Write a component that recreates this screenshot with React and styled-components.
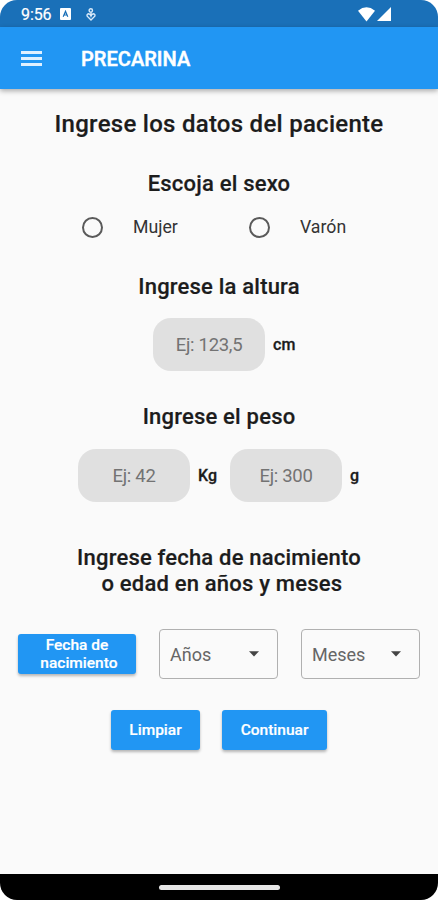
import React from 'react';
import styled, { createGlobalStyle } from 'styled-components';

const GlobalStyle = createGlobalStyle`
  * { box-sizing: border-box; }
  body { margin: 0; background: #fff; font-family: Roboto, sans-serif; }
  button, input { font-family: inherit; }
`;

const Screen = styled.div`
  width: 438px;
  height: 900px;
  display: flex;
  flex-direction: column;
  overflow: hidden;
  border-radius: 17px;
  background: #fafafa;
`;

const StatusBar = styled.div`
  height: 27px;
  flex: none;
  display: flex;
  align-items: center;
  padding: 1px 47px 0 21px;
  background: #1a70b8;
  color: #fff;
  svg { display: block; }
`;

const Clock = styled.span`
  width: 39px;
  padding-top: 1px;
  font-size: 16px;
  letter-spacing: -0.1px;
  line-height: 26px;
  -webkit-text-stroke: 0.2px;
`;

const StatusIcons = styled.div`
  flex: 1;
  display: flex;
  align-items: center;
  gap: ${(p) => p.$gap}px;
  justify-content: ${(p) => (p.$end ? 'flex-end' : 'flex-start')};
`;

const AppBar = styled.header`
  height: 62px;
  flex: none;
  display: flex;
  align-items: center;
  gap: 39px;
  padding: 1px 21px 0;
  background: #2196f3;
  box-shadow: 0 2px 5px rgba(0, 0, 0, 0.32);
`;

const MenuButton = styled.button`
  width: 21px;
  height: 15px;
  display: flex;
  flex-direction: column;
  justify-content: space-between;
  padding: 0;
  border: 0;
  background: none;
`;

const MenuLine = styled.span`
  height: 3px;
  background: #dff0ff;
`;

const AppTitle = styled.div`
  color: #fff;
  font-size: 20px;
  font-weight: 500;
  line-height: 24px;
  letter-spacing: 0.05px;
  -webkit-text-stroke: 0.5px;
`;

const Form = styled.main`
  flex: 1;
  display: flex;
  flex-direction: column;
  align-items: center;
  padding-top: 21px;
  color: #1c1c1c;
`;

const Title = styled.h1`
  margin: 0;
  font-size: 24px;
  font-weight: 500;
  line-height: 28px;
  letter-spacing: 0.27px;
  white-space: nowrap;
  -webkit-text-stroke: 0.2px;
`;

const Heading = styled.h2`
  margin: ${(p) => p.$top}px 0 0;
  font-size: 22px;
  font-weight: 500;
  line-height: 26px;
  letter-spacing: 0.2px;
  text-align: center;
  white-space: pre;
  -webkit-text-stroke: 0.2px;
`;

const Row = styled.div`
  display: flex;
  align-items: center;
  margin-top: ${(p) => p.$top}px;
  gap: ${(p) => p.$gap || 0}px;
`;

const Option = styled.label`
  width: ${(p) => p.$width}px;
  display: flex;
  align-items: center;
  gap: 30px;
  color: #333;
  font-size: 17.7px;
  line-height: 26px;
`;

const Radio = styled.span`
  width: 21px;
  height: 21px;
  border: 2px solid #5a5a5a;
  border-radius: 50%;
`;

const Field = styled.input`
  width: 112px;
  height: 53px;
  padding: 1px 0 0;
  border: 0;
  border-radius: 18px;
  background: #e0e0e0;
  text-align: center;
  font-size: 18.5px;
  letter-spacing: -0.3px;
  &::placeholder { color: #737373; opacity: 1; }
`;

const Unit = styled.span`
  width: ${(p) => p.$width}px;
  padding: 1px 0 0 8px;
  font-size: 16px;
  font-weight: 500;
  line-height: 24px;
  letter-spacing: 0.2px;
  -webkit-text-stroke: 0.3px;
`;

const Button = styled.button`
  width: ${(p) => p.$width}px;
  height: 40px;
  padding: 0;
  border: 0;
  border-radius: 3px;
  background: #2196f3;
  box-shadow: 0 2px 3px rgba(0, 0, 0, 0.28);
  color: #fff;
  font-size: 15.5px;
  font-weight: 500;
  line-height: 18px;
  white-space: pre;
  -webkit-text-stroke: 0.2px;
`;

const Select = styled.button`
  width: 119px;
  height: 50px;
  display: flex;
  align-items: center;
  justify-content: space-between;
  padding: 0 18px 0 10px;
  border: 1px solid #b0b0b0;
  border-radius: 4px;
  background: transparent;
  color: #666;
  font-size: 18px;
`;

const NavBar = styled.div`
  height: 26px;
  flex: none;
  display: flex;
  justify-content: center;
  align-items: center;
  background: #000;
`;

const HomeHandle = styled.span`
  width: 121px;
  height: 5px;
  border-radius: 3px;
  background: #e6e6e6;
`;

const Caret = () => (
  <svg width="10" height="6" viewBox="0 0 10 6"><path d="M0 .3h10L5 5.5z" fill="#444" /></svg>
);

const Dropdown = ({ label }) => (
  <Select type="button">{label}<Caret /></Select>
);

export default function App() {
  return (
    <>
      <GlobalStyle />
      <Screen>
        <StatusBar>
          <Clock>9:56</Clock>
          <StatusIcons $gap={15}>
            <svg width="11" height="12" viewBox="0 0 11 12">
              <rect width="11" height="12" rx="1" fill="#fff" />
              <path d="M3.2 8.8 5.5 3.4 7.8 8.8M4 7h3" fill="none" stroke="#1a70b8" strokeWidth="1.2" />
            </svg>
            <svg width="10" height="13" viewBox="0 0 10 13" fill="none" stroke="#d9eafa" strokeWidth="1.4">
              <circle cx="4.8" cy="2.4" r="1.7" />
              <path d="M5 12 1.2 8.2Q.5 6 2.5 5.7 4.2 5.8 5 8 5.8 5.8 7.5 5.7 9.5 6 8.8 8.2zM5 4v4.5" />
            </svg>
          </StatusIcons>
          <StatusIcons $gap={2} $end>
            <svg width="17" height="15" viewBox="0 0 17 15"><path d="M0 3.7Q8.5-3 17 3.7L8.5 14.5z" fill="#fff" /></svg>
            <svg width="14" height="14" viewBox="0 0 14 14"><path d="M14 0v14H0z" fill="#fff" /></svg>
          </StatusIcons>
        </StatusBar>
        <AppBar>
          <MenuButton aria-label="Menú"><MenuLine /><MenuLine /><MenuLine /></MenuButton>
          <AppTitle>PRECARINA</AppTitle>
        </AppBar>
        <Form>
          <Title>Ingrese los datos del paciente</Title>
          <Heading $top={33}>Escoja el sexo</Heading>
          <Row $top={17}>
            <Option $width={167}><Radio />Mujer</Option>
            <Option $width={107}><Radio />Varón</Option>
          </Row>
          <Heading $top={34}>Ingrese la altura</Heading>
          <Row $top={18}>
            <Field placeholder="Ej: 123,5" />
            <Unit $width={20}>cm</Unit>
          </Row>
          <Heading $top={33}>Ingrese el peso</Heading>
          <Row $top={19}>
            <Field placeholder="Ej: 42" />
            <Unit $width={40}>Kg</Unit>
            <Field placeholder="Ej: 300" />
            <Unit $width={18}>g</Unit>
          </Row>
          <Heading $top={43}>{'Ingrese fecha de nacimiento\n o edad en años y meses'}</Heading>
          <Row $top={32} $gap={23}>
            <Button $width={118}>{'Fecha de\n nacimiento'}</Button>
            <Dropdown label="Años" />
            <Dropdown label="Meses" />
          </Row>
          <Row $top={31} $gap={22}>
            <Button $width={89}>Limpiar</Button>
            <Button $width={105}>Continuar</Button>
          </Row>
        </Form>
        <NavBar><HomeHandle /></NavBar>
      </Screen>
    </>
  );
}
